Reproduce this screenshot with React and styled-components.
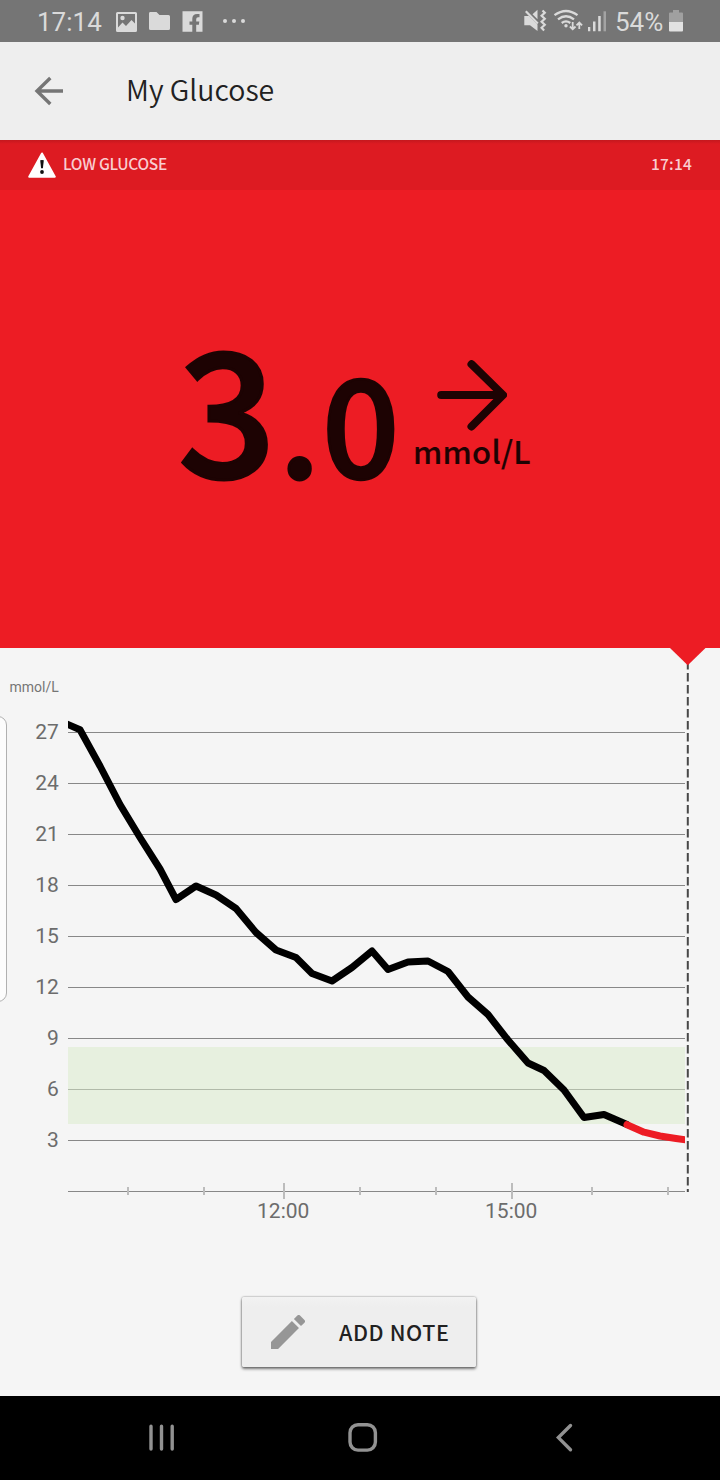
import styled, { createGlobalStyle } from "styled-components";

const gridValues = [27, 24, 21, 18, 15, 12, 9, 6, 3];

const ticks = [
    { x: 128 },
    { x: 204 },
    { x: 284, label: "12:00" },
    { x: 360 },
    { x: 436 },
    { x: 512, label: "15:00" },
    { x: 592 },
    { x: 668 },
];

const normalLine =
    "60,721 80,729.7 100,766 120,804.5 140,837.5 160,869 176,899.5 196,886 216,895 236,908.5 256,932.5 276,950 296,957.5 312,973.5 332,981 352,967.5 372,951 388,969.5 408,962 428,961 448,971.5 468,997 488,1014.5 508,1040 528,1063 544,1070.5 564,1090 584,1117.5 604,1114.5 627,1124.5";
const lowLine = "627,1124.7 644,1132.2 660,1136 676,1138.5 692,1140.8";

// 3 mmol/L is 51px on the y axis
const yOf = (value) => 1191.5 - value * 17;

export default function App() {
    return (
        <Screen>
            <GlobalStyle />
            <StatusBar>
                <Clock>17:14</Clock>
                <NotificationIcons />
                <SystemIcons />
                <Percent>54%</Percent>
                <Battery />
            </StatusBar>
            <AppBar>
                <BackButton aria-label="Back">
                    <svg width="30" height="30" viewBox="0 0 30 30">
                        <path
                            d="M29 15H3M16.3 2L3 15l13.300 13"
                            fill="none"
                            stroke="#757575"
                            strokeWidth="3.4"
                        />
                    </svg>
                </BackButton>
                <Title>My Glucose</Title>
            </AppBar>
            <AlertBar>
                <svg width="28" height="26" viewBox="0 0 28 26">
                    <path
                        d="M14 1.500L26.800 24.700H1.200z"
                        fill="#fff"
                        stroke="#fff"
                        strokeWidth="2"
                        strokeLinejoin="round"
                    />
                    <path d="M12.200 8.300q1.800-.8 3.600 0l-.9 8h-1.800z" fill="#111" />
                    <circle cx="14" cy="20" r="1.900" fill="#111" />
                </svg>
                <AlertText>LOW GLUCOSE</AlertText>
                <AlertTime>17:14</AlertTime>
            </AlertBar>
            <Reading>
                <Value>
                    <Whole>3</Whole>
                    <Dot>.</Dot>
                    <Decimal>0</Decimal>
                </Value>
                <Trend>
                    <svg width="70" height="72" viewBox="0 0 70 72">
                        <path
                            d="M4.200 35H65M34.500 4.200L66 35l-31.500 31.500"
                            fill="none"
                            stroke="#1d0303"
                            strokeWidth="8"
                            strokeLinecap="round"
                            strokeLinejoin="round"
                        />
                    </svg>
                    <Unit>mmol/L</Unit>
                </Trend>
            </Reading>
            <Content>
                <EdgeHandle />
                <Chart />
                <NoteButton>
                    <svg width="34" height="34" viewBox="3 3 18 18">
                        <path
                            fill="#969696"
                            d="M3 17.250V21h3.750L17.810 9.940l-3.750-3.750L3 17.250zM20.710 7.040a1 1 0 0 0 0-1.410l-2.340-2.340a1 1 0 0 0-1.410 0l-1.830 1.830 3.750 3.750 1.830-1.830z"
                        />
                    </svg>
                    <ButtonTitle>ADD NOTE</ButtonTitle>
                </NoteButton>
            </Content>
            <NavBar>
                <NavIcon>
                    <path d="M11 9.200v22.800M21.500 9.200v22.800M32.200 9.200v22.800" />
                </NavIcon>
                <NavIcon>
                    <rect x="9" y="7.700" width="25.400" height="25.400" rx="8" />
                </NavIcon>
                <NavIcon>
                    <path d="M28.500 8.500L16.400 20.600l12.100 12.100" />
                </NavIcon>
            </NavBar>
        </Screen>
    );
}

function NotificationIcons() {
    return (
        <NotificationSvg width="132" height="22" viewBox="116 11 132 22">
            <path
                fillRule="evenodd"
                d="M117.500 12h18q1.500 0 1.500 1.500v17q0 1.500-1.500 1.500h-18q-1.500 0-1.500-1.500v-17q0-1.500 1.500-1.500zM118 14v13.500l4.500-5 3.500 3.500 5.500-6 3.500 3.500V14z"
            />
            <circle cx="122.500" cy="18" r="2.200" />
            <path d="M150 12h6.500l3 3h9q1.500 0 1.500 1.500v12q0 1.500-1.500 1.500h-18q-1.500 0-1.500-1.500v-15q0-1.500 1-1.500z" />
            <path
                fillRule="evenodd"
                d="M182.500 11.200h20v20.500h-20zM192.300 31.700h3.900v-6.900h2.700l.4-3.400h-3.100v-2.200q0-1.900 1.900-1.900h1.400v-3.300h-2.300q-4.900 0-4.900 4.700v2.700h-2.800v3.400h2.800z"
            />
            <circle cx="225" cy="21" r="2" />
            <circle cx="234" cy="21" r="2" />
            <circle cx="243" cy="21" r="2" />
        </NotificationSvg>
    );
}

function SystemIcons() {
    return (
        <SystemSvg width="83" height="24" viewBox="524 9 83 24">
            {/* muted speaker */}
            <path d="M524.300 16h4.700l8.500 8.500v6.500l-7.500-5.800h-5.700zM532.500 14.200l5-4.500v9.500z" />
            <path
                d="M525.800 11.200l12 12.300M542.500 10.500l2.300 2.300-3.200 3 3.200 3-3.200 3 3.200 3-3.200 3 2.500 2.600"
                fill="none"
                stroke="#dadada"
                strokeWidth="2.200"
            />
            {/* wifi with data arrows */}
            <path
                d="M554.500 15.200q11.500-8.500 23 0M558 19.300q8-6.200 16 0M561.700 23q4.300-3.200 8.600 0"
                fill="none"
                stroke="#dadada"
                strokeWidth="2.300"
            />
            <circle cx="566" cy="25.800" r="1.700" />
            <path
                d="M572.700 22v7M569.900 26.500l2.800 2.800 2.800-2.800M579.300 29v-5.500M576.500 25.300l2.800-2.800 2.800 2.800"
                fill="none"
                stroke="#dadada"
                strokeWidth="1.800"
            />
            <path d="M588 27h2.300v4.300H588zM593 21.500h2.500v9.800H593zM598.200 16h2.500v15.300h-2.500z" />
            <path d="M603.500 11.300h2.500v20h-2.500z" fill="#a3a3a3" />
        </SystemSvg>
    );
}

function Battery() {
    return (
        <svg width="14" height="22" viewBox="0 0 14 22">
            <path d="M4 0h6v2.500h3q1 0 1 1V12H0V3.500q0-1 1-1h3z" fill="#a0a0a0" />
            <path d="M0 12h14v8.500q0 1-1 1H1q-1 0-1-1z" fill="#e2e2e2" />
        </svg>
    );
}

function Chart() {
    return (
        <ChartSvg width="720" height="649" viewBox="0 648 720 649">
            <defs>
                <clipPath id="plot">
                    <rect x="68" y="700" width="617" height="500" />
                </clipPath>
            </defs>
            <AxisUnit x="58.800" y="692">
                mmol/L
            </AxisUnit>
            {gridValues.map((value) => (
                <g key={value}>
                    <GridLine x1="68" x2="685" y1={yOf(value)} y2={yOf(value)} />
                    <AxisLabel x="58.800" y={yOf(value) + 6.5}>
                        {value}
                    </AxisLabel>
                </g>
            ))}
            <rect
                x="68"
                y="1047"
                width="617"
                height="77"
                fill="#d9ebca"
                fillOpacity="0.5"
            />
            <GridLine x1="68" x2="685" y1="1191.500" y2="1191.500" />
            {ticks.map(({ x, label }) => (
                <g key={x}>
                    <rect
                        x={x - 1}
                        y={label ? 1183 : 1187}
                        width="2"
                        height={label ? 16 : 8}
                        fill="#bcbcbc"
                    />
                    {label && (
                        <AxisLabel x={x - 0.8} y="1218" $center>
                            {label}
                        </AxisLabel>
                    )}
                </g>
            ))}
            <g clipPath="url(#plot)">
                <GlucoseLine points={normalLine} stroke="#000" />
                <GlucoseLine points={lowLine} stroke="#ed1c24" />
            </g>
            <line
                x1="687.800"
                x2="687.800"
                y1="661"
                y2="1192"
                stroke="#484848"
                strokeWidth="2"
                strokeDasharray="8.500 3.500"
            />
            <path d="M670 648h35.500l-17.750 17.300z" fill="#ed1c24" />
        </ChartSvg>
    );
}

const GlobalStyle = createGlobalStyle`
    * {
        box-sizing: border-box;
    }
    body {
        margin: 0;
    }
    svg {
        display: block;
        flex-shrink: 0;
    }
`;

const Screen = styled.div`
    width: 720px;
    height: 1480px;
    display: flex;
    flex-direction: column;
    overflow: hidden;
    background-color: #f5f5f5;
    font-family: "Noto Sans CJK SC", "Noto Sans", sans-serif;
`;

const StatusBar = styled.div`
    height: 42px;
    display: flex;
    align-items: center;
    padding: 0 37px 0 37px;
    background-color: #757575;
    color: #dadada;
    font-family: Roboto, sans-serif;
    font-size: 26px;
    line-height: 42px;
`;

const Clock = styled.span`
    width: 79px;
    height: 42px;
    padding-top: 1px;
`;

const NotificationSvg = styled.svg`
    fill: #dadada;
    margin-top: 2px;
`;

const SystemSvg = styled.svg`
    fill: #dadada;
    margin-left: auto;
`;

const Percent = styled.span`
    width: 54px;
    height: 42px;
    padding-top: 1px;
    margin-left: 8px;
`;

const AppBar = styled.header`
    height: 98px;
    display: flex;
    align-items: center;
    padding-left: 34px;
    background-color: #eeeeee;
`;

const BackButton = styled.button`
    padding: 0;
    border: none;
    background: none;
    cursor: pointer;
`;

const Title = styled.h1`
    margin: 0 0 5px 62px;
    color: #212121;
    font-size: 28.500px;
    font-weight: 350;
    line-height: 40px;
`;

const AlertBar = styled.div`
    height: 50px;
    display: flex;
    align-items: center;
    padding: 0 28px;
    background: linear-gradient(#c4181e, #dd1b22 4px);
`;

const AlertText = styled.span`
    margin: 0 0 4px 7px;
    color: #f9cdd0;
    font-size: 15.500px;
    font-weight: 500;
    line-height: 24px;
    letter-spacing: -0.3px;
`;

const AlertTime = styled(AlertText)`
    margin-left: auto;
    letter-spacing: 0.2px;
`;

const Reading = styled.section`
    height: 458px;
    display: flex;
    align-items: flex-start;
    padding: 127px 0 0 178px;
    background-color: #ed1c24;
    color: #1d0303;
`;

const Value = styled.div`
    width: 236px;
    display: flex;
    align-items: baseline;
    font-weight: 500;
    line-height: 172px;
`;

const Whole = styled.span`
    width: 101px;
    font-size: 172px;
    -webkit-text-stroke: 3px #1d0303;
`;

const Dot = styled.span`
    width: 43px;
    font-size: 138px;
    -webkit-text-stroke: 3px #1d0303;
`;

const Decimal = styled.span`
    font-size: 136px;
    -webkit-text-stroke: 2.500px #1d0303;
`;

const Trend = styled.div`
    padding-top: 43px;

    svg {
        margin-left: 23px;
    }
`;

const Unit = styled.div`
    margin-left: -1px;
    font-size: 31px;
    font-weight: 500;
    line-height: 38px;
    letter-spacing: 0.3px;
    -webkit-text-stroke: 0.2px #1d0303;
`;

const Content = styled.main`
    position: relative;
    height: 748px;
    background-color: #f5f5f5;
`;

const EdgeHandle = styled.div`
    position: absolute;
    left: -20px;
    top: 68px;
    width: 27px;
    height: 286px;
    border: 1px solid #b0b0b0;
    border-radius: 9px;
    background-color: #fcfcfc;
`;

const ChartSvg = styled.svg`
    font-family: Roboto, sans-serif;
`;

const AxisUnit = styled.text`
    fill: #757575;
    font-size: 14px;
    text-anchor: end;
`;

const AxisLabel = styled.text`
    fill: #6c6c6c;
    font-size: 21px;
    text-anchor: ${(props) => (props.$center ? "middle" : "end")};
`;

const GridLine = styled.line`
    stroke: #888888;
    stroke-width: 1px;
`;

const GlucoseLine = styled.polyline`
    fill: none;
    stroke-width: 7px;
    stroke-linecap: round;
    stroke-linejoin: round;
`;

const NoteButton = styled.button`
    width: 234px;
    height: 70px;
    display: flex;
    align-items: center;
    margin-left: 242px;
    padding: 0 0 0 29px;
    border: none;
    border-radius: 2px;
    background: linear-gradient(#f2f2f2, #eeeeee 10px);
    box-shadow: 0 0 2px rgba(0, 0, 0, 0.5), 0 2px 3px rgba(0, 0, 0, 0.5);
    font-family: inherit;
    cursor: pointer;
`;

const ButtonTitle = styled.span`
    margin-left: 34px;
    color: #212121;
    font-size: 21.500px;
    font-weight: 500;
    line-height: 32px;
    letter-spacing: 0.6px;
    white-space: nowrap;
`;

const NavBar = styled.nav`
    height: 84px;
    display: flex;
    justify-content: space-between;
    align-items: center;
    padding: 0 136px 0 140px;
    background-color: #000;
`;

const NavIcon = styled.svg.attrs({ viewBox: "0 0 42 42" })`
    width: 42px;
    height: 42px;
    fill: none;
    stroke: #929292;
    stroke-width: 3.400px;
    stroke-linecap: round;
`;
